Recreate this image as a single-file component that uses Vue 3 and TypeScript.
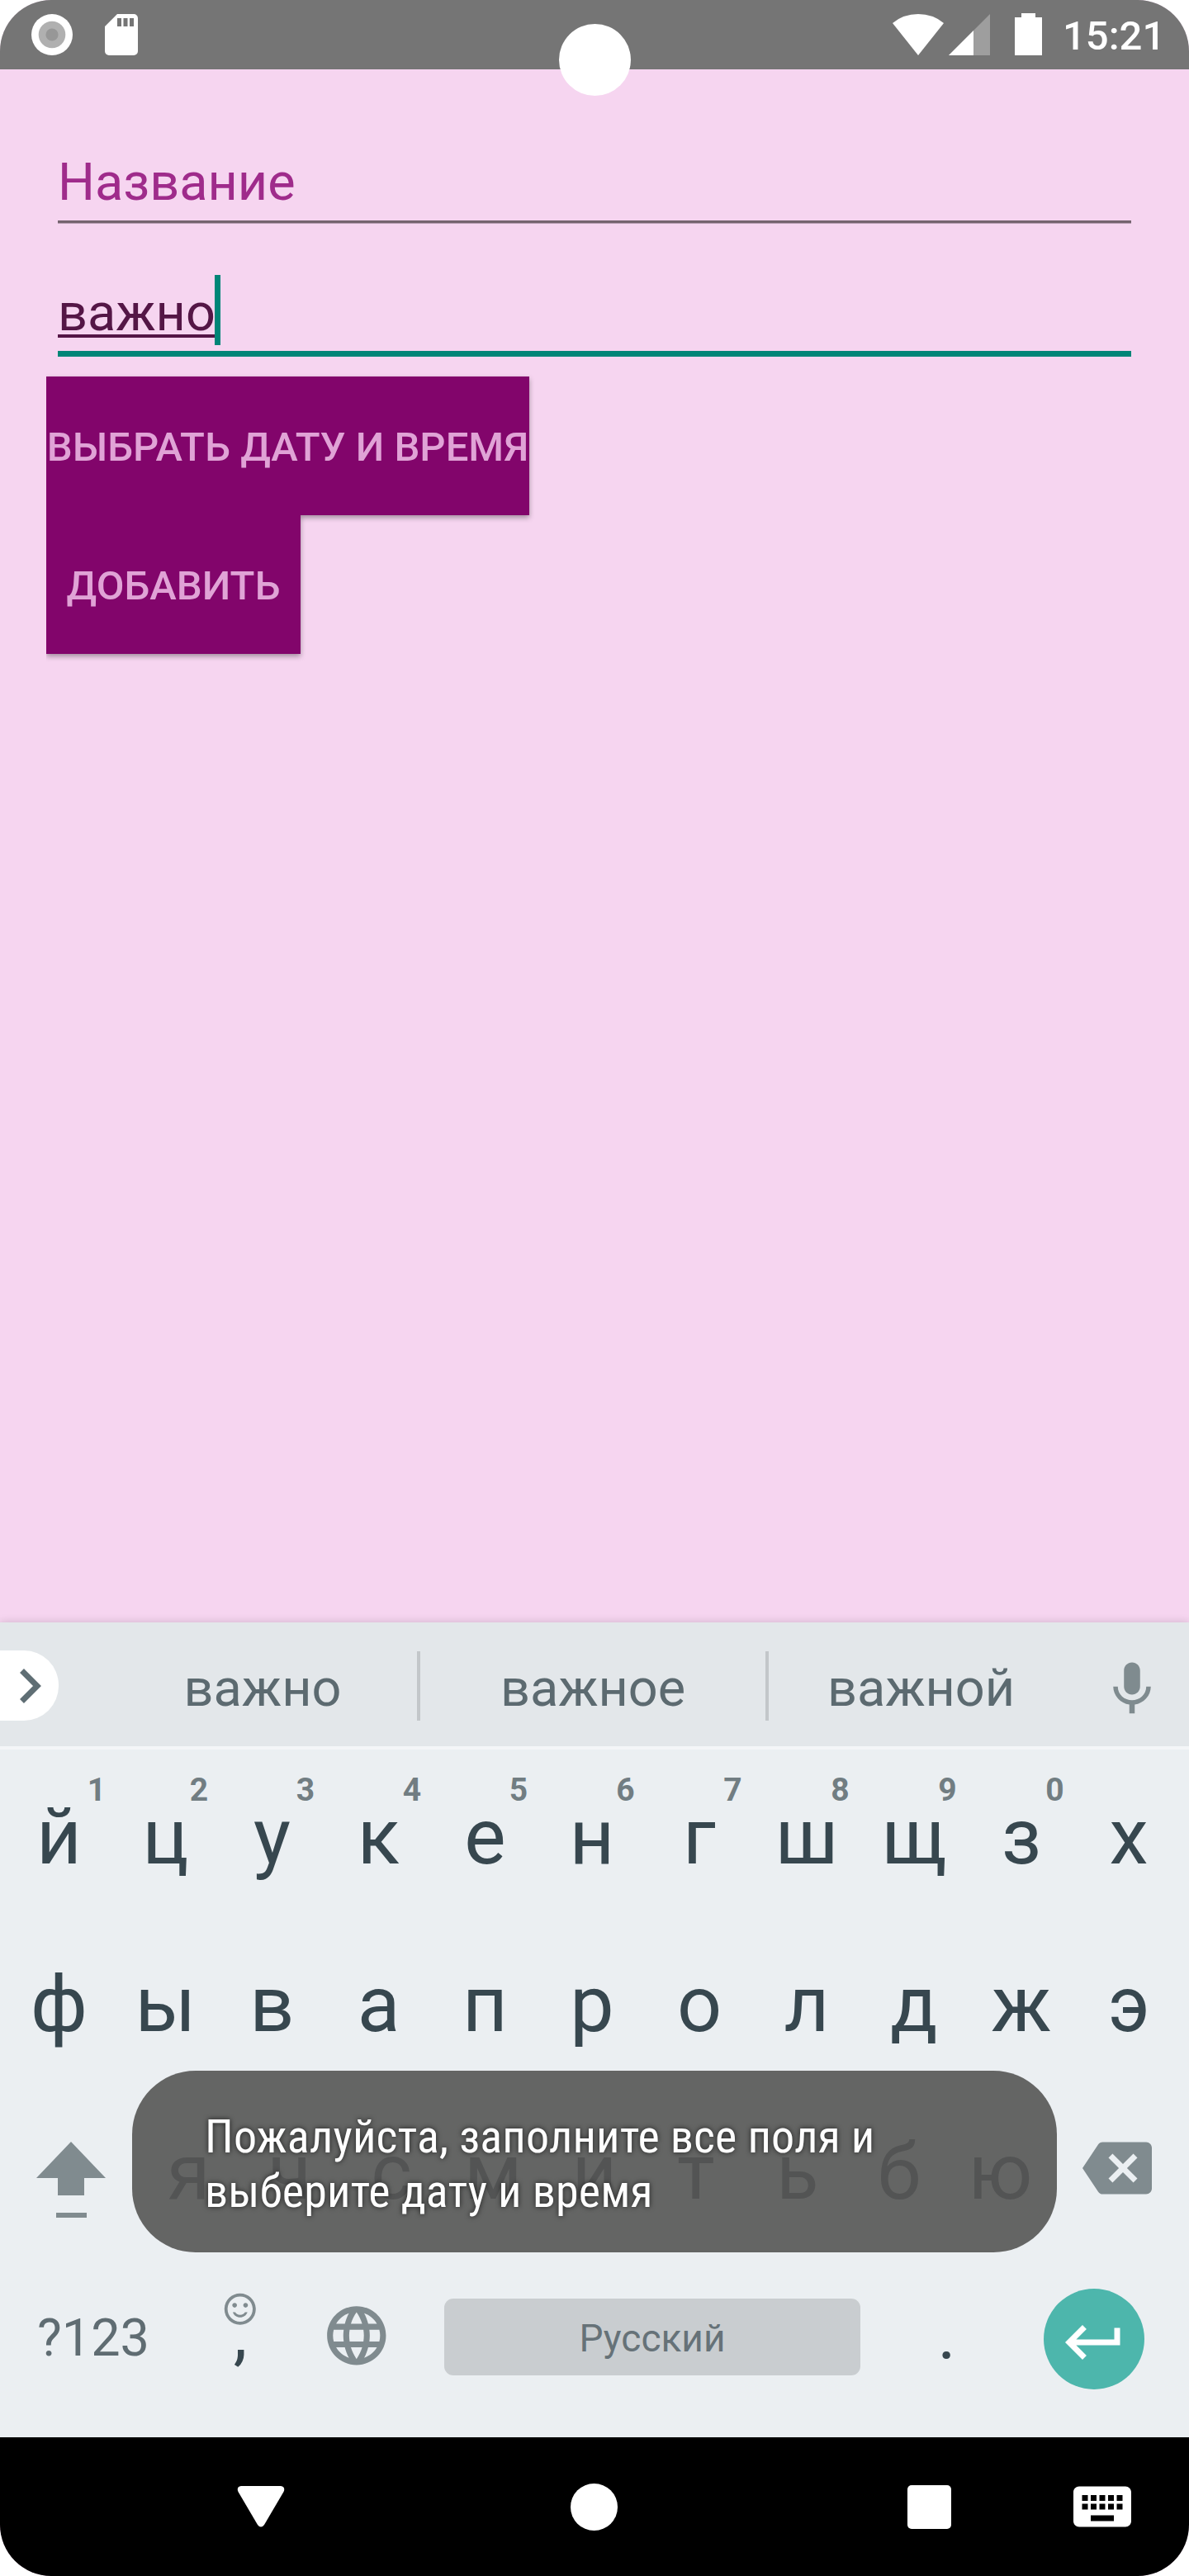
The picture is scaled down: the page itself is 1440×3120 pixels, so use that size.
<script setup lang="ts">
interface Key {
  label: string
  hint?: string
}

const topRow: Key[] = [
  { label: 'й', hint: '1' },
  { label: 'ц', hint: '2' },
  { label: 'у', hint: '3' },
  { label: 'к', hint: '4' },
  { label: 'е', hint: '5' },
  { label: 'н', hint: '6' },
  { label: 'г', hint: '7' },
  { label: 'ш', hint: '8' },
  { label: 'щ', hint: '9' },
  { label: 'з', hint: '0' },
  { label: 'х' },
]
const middleRow: string[] = ['ф', 'ы', 'в', 'а', 'п', 'р', 'о', 'л', 'д', 'ж', 'э']
const bottomRow: string[] = ['я', 'ч', 'с', 'м', 'и', 'т', 'ь', 'б', 'ю']
</script>

<template>
  <div class="phone">
    <header class="status">
      <svg class="rec" width="50" height="50" viewBox="0 0 50 50">
        <circle cx="25" cy="25" r="25" fill="#fff" />
        <circle cx="25" cy="25" r="16.3" fill="#b0b0b0" />
        <circle cx="25" cy="25" r="7.6" fill="#979797" />
      </svg>
      <svg class="sd" width="40" height="50" viewBox="0 0 40 50">
        <path fill="#fff" fill-rule="evenodd" d="M15 0H35a5 5 0 0 1 5 5V45a5 5 0 0 1-5 5H5a5 5 0 0 1-5-5V15ZM15 5v10h5V5ZM22.500 5v10h5V5ZM30 5v10h5V5Z" />
      </svg>
      <div class="grow"></div>
      <svg class="wifi" width="62" height="50" viewBox="0 0 62 50">
        <path fill="#fff" d="M31 50L0 11Q13 0 31 0T62 11Z" />
      </svg>
      <svg class="signal" width="50" height="50" viewBox="0 0 50 50">
        <path fill="#9e9e9e" d="M0 50L50 0V50Z" />
        <path fill="#fff" d="M0 50L30 20V50Z" />
      </svg>
      <svg class="battery" width="33" height="51" viewBox="0 0 33 51">
        <path fill="#fff" d="M8 0H25V5H33V51H0V5H8Z" />
      </svg>
      <span class="clock">15:21</span>
      <span class="camera"></span>
    </header>

    <main class="form">
      <div class="field first">
        <span class="hint">Название</span>
      </div>
      <div class="field second">
        <span class="value">важно</span><span class="caret"></span>
      </div>
      <div class="buttons">
        <button class="btn wide">ВЫБРАТЬ ДАТУ И ВРЕМЯ</button>
        <button class="btn small">ДОБАВИТЬ</button>
      </div>
    </main>

    <section class="keyboard">
      <div class="strip">
        <div class="tab">
          <svg width="26" height="42" viewBox="0 0 26 42">
            <path d="M2.500 2.500L21 21L2.500 39.500" fill="none" stroke="#5f6e74" stroke-width="7" />
          </svg>
        </div>
        <span class="word w1">важно</span>
        <i class="rule"></i>
        <span class="word w2">важное</span>
        <i class="rule"></i>
        <span class="word w3">важной</span>
        <div class="mic">
          <svg width="78" height="78" viewBox="0 0 24 24">
            <path fill="#7f8b8f" d="M12 14c1.660 0 3-1.340 3-3V5c0-1.660-1.340-3-3-3S9 3.340 9 5v6c0 1.660 1.340 3 3 3zM17.300 11c0 3-2.540 5.100-5.300 5.100S6.700 14 6.700 11H5c0 3.410 2.720 6.230 6 6.720V21h2v-3.280c3.280-.48 6-3.300 6-6.720z" />
          </svg>
        </div>
      </div>

      <div class="rows">
        <div class="row full">
          <div v-for="k in topRow" :key="k.label" class="key">
            {{ k.label }}<span v-if="k.hint" class="num">{{ k.hint }}</span>
          </div>
        </div>
        <div class="row full">
          <div v-for="k in middleRow" :key="k" class="key">{{ k }}</div>
        </div>
        <div class="row">
          <div class="shift">
            <svg width="84" height="92" viewBox="0 0 84 92">
              <path fill="#808b8f" d="M42 0L84 44H58V65H26V44H0ZM24 86h37v6H24Z" />
            </svg>
          </div>
          <div v-for="k in bottomRow" :key="k" class="key">{{ k }}</div>
          <div class="erase">
            <svg width="84" height="84" viewBox="0 0 24 24">
              <path fill="#808b8f" d="M22 3H7c-.69 0-1.230.35-1.590.88L0 12l5.410 8.110c.36.53.9.89 1.590.89h15c1.100 0 2-.9 2-2V5c0-1.100-.9-2-2-2zm-3 12.590L17.590 17 14 13.410 10.410 17 9 15.590 12.590 12 9 8.410 10.410 7 14 10.590 17.590 7 19 8.410 15.410 12 19 15.590z" />
            </svg>
          </div>
        </div>
        <div class="row last">
          <div class="symbols">?123</div>
          <div class="comma">
            <svg class="smile" width="45.600" height="45.600" viewBox="0 0 24 24">
              <path fill="#808b8f" d="M11.990 2C6.470 2 2 6.480 2 12s4.470 10 9.990 10C17.520 22 22 17.520 22 12S17.520 2 11.990 2zM12 20c-4.420 0-8-3.580-8-8s3.580-8 8-8 8 3.580 8 8-3.580 8-8 8zm3.500-9c.83 0 1.500-.67 1.500-1.500S16.330 8 15.500 8 14 8.670 14 9.500s.67 1.500 1.500 1.500zm-7 0c.83 0 1.500-.67 1.500-1.500S9.330 8 8.500 8 7 8.670 7 9.500 7.670 11 8.500 11zm3.500 4.700c-1.500 0-2.600-.7-3.100-1.700H7.300c.7 2 2.500 3.300 4.700 3.300s4-1.300 4.700-3.300h-1.600c-.5 1-1.600 1.700-3.100 1.700z" />
            </svg>
            <span>,</span>
          </div>
          <div class="globe">
            <svg width="85.600" height="85.600" viewBox="0 0 24 24">
              <path fill="#808b8f" d="M11.990 2C6.470 2 2 6.480 2 12s4.470 10 9.990 10C17.520 22 22 17.520 22 12S17.520 2 11.990 2zm6.930 6h-2.950c-.32-1.250-.78-2.450-1.380-3.560 1.840.63 3.370 1.910 4.330 3.560zM12 4.040c.83 1.200 1.480 2.530 1.910 3.960h-3.820c.43-1.430 1.080-2.760 1.910-3.960zM4.260 14C4.100 13.360 4 12.690 4 12s.1-1.360.26-2h3.380c-.08.66-.14 1.320-.14 2 0 .68.060 1.340.14 2H4.260zm.82 2h2.950c.32 1.250.78 2.450 1.380 3.560-1.840-.63-3.370-1.900-4.330-3.560zm2.950-8H5.080c.96-1.660 2.490-2.930 4.330-3.560C8.810 5.550 8.350 6.750 8.030 8zM12 19.960c-.83-1.200-1.480-2.530-1.910-3.960h3.820c-.43 1.430-1.080 2.760-1.910 3.960zM14.340 14H9.660c-.09-.66-.16-1.320-.16-2 0-.68.070-1.350.16-2h4.680c.09.65.16 1.320.16 2 0 .68-.070 1.340-.16 2zm.25 5.560c.6-1.110 1.060-2.310 1.380-3.560h2.950c-.96 1.650-2.490 2.930-4.330 3.560zM16.360 14c.08-.66.14-1.320.14-2 0-.68-.060-1.340-.14-2h3.380c.16.640.26 1.310.26 2s-.1 1.360-.26 2h-3.380z" />
            </svg>
          </div>
          <div class="space">Русский</div>
          <div class="period">.</div>
          <div class="enter">
            <svg width="84" height="84" viewBox="0 0 24 24">
              <path fill="#fff" d="M19 7v4H5.830l3.580-3.590L8 6l-6 6 6 6 1.410-1.410L5.830 13H21V7z" />
            </svg>
          </div>
        </div>
      </div>

      <div class="toast">
        <span>Пожалуйста, заполните все поля и<br />выберите дату и время</span>
      </div>
    </section>

    <nav class="nav">
      <svg class="back" width="58" height="50" viewBox="0 0 58 50">
        <path fill="#fff" d="M5 0H53Q59 1 56.500 7L33 47Q29 52 25 47L1.500 7Q-1 1 5 0Z" />
      </svg>
      <span class="home"></span>
      <span class="recent"></span>
      <svg class="ime" width="84" height="84" viewBox="0 0 24 24">
        <path fill="#fff" fill-rule="evenodd" d="M20 5H4c-1.100 0-2 .9-2 2v10c0 1.100.9 2 2 2h16c1.100 0 2-.9 2-2V7c0-1.100-.9-2-2-2zM5 8h2v2H5zM8 8h2v2H8zM11 8h2v2h-2zM14 8h2v2h-2zM17 8h2v2h-2zM5 11h2v2H5zM8 11h2v2H8zM11 11h2v2h-2zM14 11h2v2h-2zM17 11h2v2h-2zM8 15h8v2H8z" />
      </svg>
    </nav>
  </div>
</template>

<style>
body {
  background: #fff;
}
</style>

<style scoped>
.phone {
  width: 1440px;
  height: 3120px;
  display: flex;
  flex-direction: column;
  overflow: hidden;
  border-radius: 62px;
  background: #f6d5f0;
  font-family: Roboto, 'Noto Sans', sans-serif;
}
svg {
  display: block;
  flex: none;
}
.grow {
  flex: 1;
}

.status {
  position: relative;
  z-index: 2;
  flex: none;
  height: 84px;
  display: flex;
  align-items: center;
  padding: 0 37px 0 38px;
  box-sizing: border-box;
  background: #757575;
}
.sd {
  margin-left: 39px;
}
.signal {
  margin-left: 6px;
}
.battery {
  margin: 0 25px 1px 30px;
}
.clock {
  width: 116px;
  padding-top: 4px;
  font-size: 49px;
  font-weight: 500;
  line-height: 58px;
  color: #fff;
  white-space: nowrap;
}
.camera {
  position: absolute;
  left: 677px;
  top: 29px;
  width: 87px;
  height: 87px;
  border-radius: 50%;
  background: #fff;
}

.form {
  flex: none;
  height: 1881px;
  display: flex;
  flex-direction: column;
  padding-left: 56px;
  box-sizing: border-box;
}
.field {
  flex: none;
  display: flex;
  width: 1300px;
  margin-left: 14px;
  box-sizing: border-box;
  font-size: 63px;
  line-height: 74px;
}
.first {
  height: 186px;
  padding-top: 100px;
  border-bottom: 3px solid #75646f;
  box-shadow: 0 1px 0 #b59cb0;
  color: #9f2b8b;
}
.second {
  height: 162px;
  padding-top: 63px;
  border-bottom: 7px solid #008577;
  color: #541646;
}
.value {
  height: 76px;
  margin-top: 9px;
  text-decoration: underline;
  text-decoration-thickness: 4px;
  text-underline-offset: 5px;
  text-decoration-skip-ink: none;
}
.caret {
  width: 7px;
  height: 85px;
  margin-left: -1px;
  background: #008577;
}
.buttons {
  display: flex;
  flex-direction: column;
  align-items: flex-start;
  margin-top: 24px;
  padding-bottom: 30px;
  clip-path: inset(-20px 0 0 0);
  filter: drop-shadow(0 3px 3px rgba(0, 0, 0, 0.34));
}
.btn {
  height: 168px;
  padding: 4px 0 0;
  border: 0;
  border-radius: 0;
  background: #82056b;
  color: #e0a3d6;
  font: 500 49px/58px Roboto, sans-serif;
  white-space: nowrap;
}
.wide {
  width: 585px;
}
.small {
  width: 308px;
}

.keyboard {
  position: relative;
  flex: none;
  height: 987px;
  background: #ebeff2;
  box-shadow: 0 0 10px rgba(0, 0, 0, 0.16);
}
.strip {
  height: 150px;
  display: flex;
  align-items: center;
  background: #e3e7ea;
  border-bottom: 4px solid #f4f6f8;
}
.tab {
  width: 71px;
  height: 85px;
  margin: 3px 60px 0 0;
  display: flex;
  align-items: center;
  padding-left: 24px;
  box-sizing: border-box;
  border-radius: 0 42px 42px 0;
  background: #fff;
}
.word {
  padding-top: 9px;
  text-align: center;
  font-size: 63px;
  line-height: 74px;
  color: #5c6a70;
}
.w1 {
  width: 374px;
}
.w2 {
  width: 418px;
}
.w3 {
  width: 369px;
}
.rule {
  width: 4px;
  height: 84px;
  margin-top: 4px;
  background: #c3c7ca;
}
.mic {
  margin: 11px 0 0 32px;
}

.rows {
  padding: 4px 7px 0;
}
.row {
  display: flex;
  height: 203px;
}
.key {
  position: relative;
  flex: 1;
  text-align: center;
  font-size: 95px;
  line-height: 203px;
  color: #37474f;
}
.full .key {
  flex: none;
  width: 130px;
}
.full .key:nth-child(-n + 5) {
  width: 129px;
}
.num {
  position: absolute;
  left: calc(50% + 20px);
  top: 22px;
  width: 41px;
  font-size: 39px;
  font-weight: 700;
  line-height: 46px;
  color: #717d82;
}
.key:first-child .num {
  left: calc(50% + 25px);
}
.shift {
  width: 160px;
  padding: 65px 0 0 37px;
  box-sizing: border-box;
}
.erase {
  width: 160px;
  padding: 55px 0 0 38px;
  box-sizing: border-box;
}
.last {
  height: 197px;
  align-items: center;
}
.symbols {
  width: 212px;
  padding-top: 2px;
  text-align: center;
  font-size: 63px;
  line-height: 74px;
  color: #5f6c72;
}
.comma {
  width: 144px;
  height: 197px;
  display: flex;
  flex-direction: column;
  align-items: center;
  color: #37474f;
  font-size: 84px;
  line-height: 98px;
}
.smile {
  margin-top: 42px;
}
.comma span {
  margin-top: -42px;
}
.globe {
  width: 138px;
  display: flex;
  justify-content: center;
  padding-bottom: 3px;
}
.space {
  width: 504px;
  height: 93px;
  margin-left: 37px;
  padding-top: 3px;
  box-sizing: border-box;
  border-radius: 11px;
  background: #c9cdd0;
  color: #667278;
  text-align: center;
  font-size: 46px;
  line-height: 91px;
}
.period {
  width: 209px;
  text-align: center;
  font-size: 84px;
  line-height: 98px;
  padding-bottom: 4px;
  color: #37474f;
}
.enter {
  width: 122px;
  height: 122px;
  margin: 4px 0 0 13px;
  padding: 23px 0 0 19px;
  box-sizing: border-box;
  border-radius: 50%;
  background: #4db6ac;
}

.toast {
  position: absolute;
  left: 160px;
  top: 543px;
  width: 1120px;
  height: 220px;
  box-sizing: border-box;
  padding: 47px 0 0 88px;
  border-radius: 77px;
  background: rgba(86, 86, 85, 0.906);
  color: #fff;
  font-family: 'Roboto Condensed', Roboto, sans-serif;
  font-stretch: 75%;
  font-size: 56px;
  line-height: 66px;
  letter-spacing: 0.13px;
  white-space: nowrap;
  text-shadow: 0 0 6px rgba(0, 0, 0, 0.73);
}

.nav {
  flex: none;
  height: 168px;
  display: flex;
  align-items: center;
  background: #000;
}
.back {
  margin-left: 287px;
}
.home {
  width: 57px;
  height: 57px;
  margin-left: 346px;
  border-radius: 50%;
  background: #fff;
}
.recent {
  width: 53px;
  height: 53px;
  margin-left: 351px;
  border-radius: 5px;
  background: #fff;
}
.ime {
  margin-left: 141px;
}
</style>
